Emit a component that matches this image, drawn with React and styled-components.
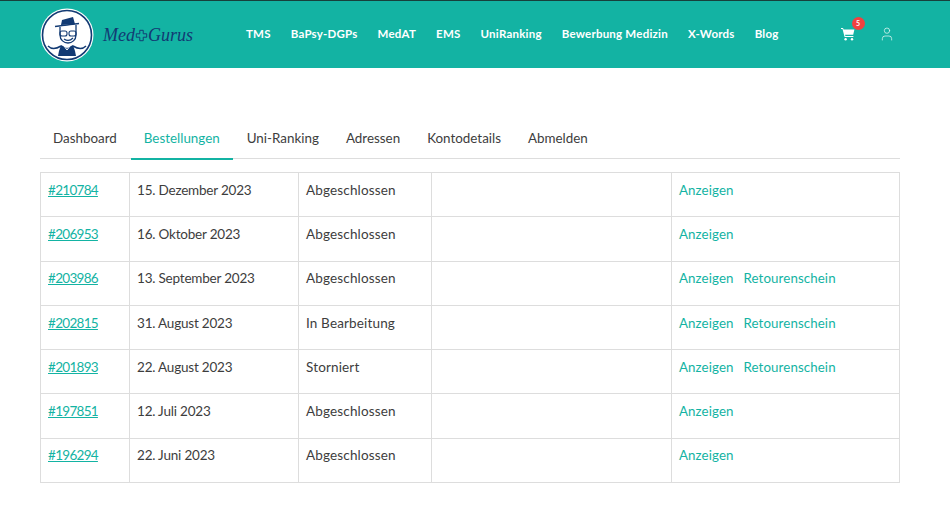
import React from 'react'
import styled, { createGlobalStyle } from 'styled-components'
import { User } from 'lucide-react'

const GlobalStyle = createGlobalStyle`
  html, body { margin: 0; padding: 0; background: #fff; }
  body { font-family: Lato, "Open Sans", sans-serif; color: #3d3d3d; }
`

const Header = styled.header`
  height: 67px; background: #13b3a3; border-top: 1px solid #17403c;
  display: flex; align-items: center; padding-left: 40px;
`
const Brand = styled.a`display: flex; align-items: center; gap: 9px; width: 206px; flex: none;`
const Wordmark = styled.span`
  display: flex; align-items: center; color: #123a73;
  font: italic 18px "Liberation Serif", serif; letter-spacing: 0; margin-top: 2px;
`
const Nav = styled.nav`display: flex; gap: 20px; align-items: center; margin-top: -2px;`
const NavLink = styled.a`color: #fff; font-size: 11.5px; font-weight: 700; letter-spacing: 0.22px; white-space: nowrap;`
const HeaderIcons = styled.div`
  display: flex; align-items: center; gap: 24px; margin-left: 62px; margin-top: -2px;
`
const CartWrap = styled.span`position: relative; display: flex; width: 14px; height: 14px;`
const Badge = styled.span`
  position: absolute; top: -10px; left: 11px; width: 13px; height: 13px; border-radius: 50%;
  background: #f2403f; color: #fff; font-size: 7px; font-weight: 700;
  display: flex; align-items: center; justify-content: center;
`

const Main = styled.main`padding: 53px 50px 0 40px;`
const Tabs = styled.div`display: flex; gap: 1px; height: 37px; border-bottom: 1px solid #ddd;`
const Tab = styled.a`
  padding: 9px 13px 0; font-size: 13.4px; height: 28px;
  color: ${p => (p.$active ? '#13b3a3' : '#3d3d3d')};
  border-bottom: 2px solid ${p => (p.$active ? '#13b3a3' : 'transparent')};
`
const Table = styled.table`
  width: 859px; margin-top: 13px; border-collapse: collapse; table-layout: fixed;
  font-size: 13.5px; letter-spacing: 0.15px;
`
const Td = styled.td`
  border: 1px solid #ddd; height: 44.3px; padding: 0 7px 10px; box-sizing: border-box;
  width: ${p => p.$w}px; white-space: nowrap;
`
const DateCell = styled(Td)`letter-spacing: -0.2px;`
const OrderLink = styled.a`color: #13b3a3; text-decoration: underline; letter-spacing: -0.7px;`
const Action = styled.a`color: #13b3a3; margin-right: 10px; font-size: 13.3px; letter-spacing: 0.1px;`

const navItems = ['TMS', 'BaPsy-DGPs', 'MedAT', 'EMS', 'UniRanking', 'Bewerbung Medizin', 'X-Words', 'Blog']
const tabs = ['Dashboard', 'Bestellungen', 'Uni-Ranking', 'Adressen', 'Kontodetails', 'Abmelden']
const orders = [
  { id: '#210784', date: '15. Dezember 2023', status: 'Abgeschlossen' },
  { id: '#206953', date: '16. Oktober 2023', status: 'Abgeschlossen' },
  { id: '#203986', date: '13. September 2023', status: 'Abgeschlossen', retour: true },
  { id: '#202815', date: '31. August 2023', status: 'In Bearbeitung', retour: true },
  { id: '#201893', date: '22. August 2023', status: 'Storniert', retour: true },
  { id: '#197851', date: '12. Juli 2023', status: 'Abgeschlossen' },
  { id: '#196294', date: '22. Juni 2023', status: 'Abgeschlossen' },
]

function LogoBadge() {
  return (
    <svg width="54" height="54" viewBox="0 0 54 54">
      <circle cx="27" cy="27" r="26.5" fill="#fff" />
      <circle cx="27" cy="27" r="24.5" fill="none" stroke="#123a73" strokeWidth="1.6" />
      <path d="M21 17l1-5 11-3 2 7z" fill="#123a73" />
      <path d="M15 18.5l24-3" stroke="#123a73" strokeWidth="1.4" />
      <path d="M20 19v8c0 5 4 8 8 8s8-3 8-8v-10" fill="#fff" stroke="#123a73" strokeWidth="1.3" />
      <rect x="20" y="23" width="7" height="5" rx="2" fill="none" stroke="#123a73" strokeWidth="1.1" />
      <rect x="29" y="23" width="7" height="5" rx="2" fill="none" stroke="#123a73" strokeWidth="1.1" />
      <path d="M24 31c3 2 6 2 9-1" fill="none" stroke="#123a73" strokeWidth="1.2" />
      <path d="M21 37l6 3 6-3 2 6 1 5H18l1-5z" fill="#123a73" />
      <path d="M8 38c4 4 8 3 13 0M46 38c-4 4-8 3-13 0" fill="none" stroke="#123a73" strokeWidth="1.5" />
      <path d="M24 38l3 4 3-4" fill="none" stroke="#fff" strokeWidth="1" />
    </svg>
  )
}

function PlusMark() {
  return (
    <svg width="13" height="13" viewBox="0 0 15 15">
      <path d="M5.5 1.5h4v4h4v4h-4v4h-4v-4h-4v-4h4z" fill="none" stroke="#123a73" strokeWidth="1.1" />
    </svg>
  )
}

function CartIcon() {
  return (
    <svg width="14" height="14" viewBox="0 0 14 14">
      <path d="M0 1h2l.6 1.4H13.4l-1.2 5.4H4l.4 1.3h8v1H3.6L1.5 2H0z" fill="#fff" />
      <circle cx="4.6" cy="12.2" r="1.2" fill="#fff" />
      <circle cx="11" cy="12.2" r="1.2" fill="#fff" />
    </svg>
  )
}

export default function App() {
  return (
    <>
      <GlobalStyle />
      <Header>
        <Brand>
          <LogoBadge />
          <Wordmark>Med<PlusMark />Gurus</Wordmark>
        </Brand>
        <Nav>
          {navItems.map(item => <NavLink key={item}>{item}</NavLink>)}
        </Nav>
        <HeaderIcons>
          <CartWrap>
            <CartIcon />
            <Badge>5</Badge>
          </CartWrap>
          <User size={16} color="#d5f2ee" strokeWidth={1.2} />
        </HeaderIcons>
      </Header>
      <Main>
        <Tabs>
          {tabs.map(t => <Tab key={t} $active={t === 'Bestellungen'}>{t}</Tab>)}
        </Tabs>
        <Table>
          <tbody>
            {orders.map(o => (
              <tr key={o.id}>
                <Td $w={89}><OrderLink>{o.id}</OrderLink></Td>
                <DateCell $w={169}>{o.date}</DateCell>
                <Td $w={133}>{o.status}</Td>
                <Td $w={240} />
                <Td $w={228}>
                  <Action>Anzeigen</Action>
                  {o.retour && <Action>Retourenschein</Action>}
                </Td>
              </tr>
            ))}
          </tbody>
        </Table>
      </Main>
    </>
  )
}
